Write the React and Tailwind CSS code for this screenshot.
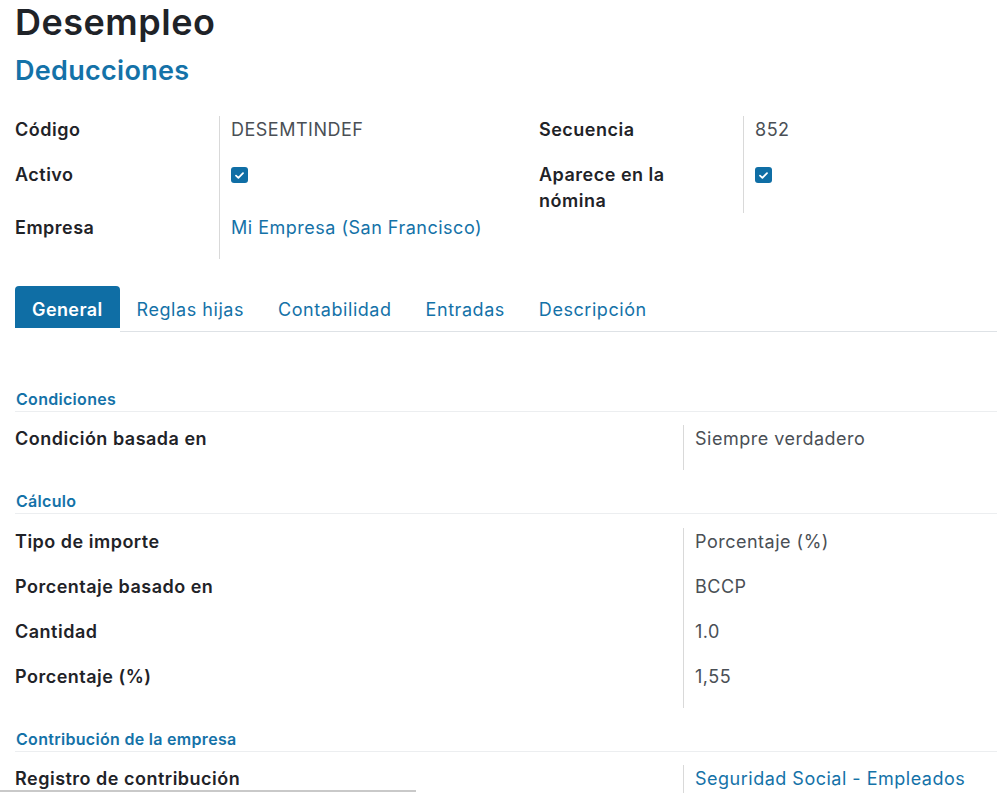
import React from "react";

const BLUE = "text-[#1472a8]";

function Check() {
  return (
    <div className="w-[17px] h-[16px] rounded-[3px] bg-[#0f6ea5] flex items-center justify-center">
      <svg width="9" height="7" viewBox="0 0 9 7" fill="none">
        <path d="M1 3.6 L3.4 5.8 L8 1.2" stroke="white" strokeWidth="1.8" strokeLinecap="round" strokeLinejoin="round" />
      </svg>
    </div>
  );
}

function Field({ label, children, h, twoLine }) {
  return (
    <>
      <div
        className={
          "font-semibold text-[#1f2328] text-[18px] tracking-[0.5px] " +
          (twoLine ? "leading-[26px] pt-[1px]" : "leading-[28px]")
        }
        style={{ height: h }}
      >
        {label}
      </div>
      <div
        className="border-l border-[#d9d9d9] pl-[11px] leading-[28px] text-[18px] tracking-[0.5px] text-[#4a4f55]"
        style={{ height: h }}
      >
        {children}
      </div>
    </>
  );
}

function SectionHeader({ children, first }) {
  return (
    <div className={(first ? "" : "mt-[21px] ") + "border-b border-[#eceef0] pb-[2px] pl-[1px]"}>
      <div className={"text-[16px] leading-[20px] font-semibold tracking-[0.3px] " + BLUE}>{children}</div>
    </div>
  );
}

function Row({ label, value, blue }) {
  return (
    <div className="grid grid-cols-[668px_1fr]">
      <div className="h-[45px] leading-[28px] text-[18px] tracking-[0.5px] font-semibold text-[#1f2328]">{label}</div>
      <div
        className={
          "border-l border-[#d9d9d9] pl-[11px] leading-[28px] text-[18px] tracking-[0.5px] " +
          (blue ? "text-[#1472a8]" : "text-[#4a4f55]")
        }
      >
        {value}
      </div>
    </div>
  );
}

export default function App() {
  return (
    <div className="relative w-[997px] h-[793px] overflow-hidden bg-white pl-[15px] font-['Inter','Noto_Sans',sans-serif]">
      <div className="text-[36px] leading-[44px] font-semibold text-[#1f2328] tracking-[0.5px]">Desempleo</div>
      <div className={"mt-[10px] text-[27px] leading-[34px] font-semibold tracking-[0.3px] " + BLUE}>Deducciones</div>

      <div className="mt-[28px] flex">
        <div className="w-[524px] grid grid-cols-[204px_1fr]">
          <Field label="Código" h="45px">DESEMTINDEF</Field>
          <Field label="Activo" h="53px">
            <div className="pt-[6px]">
              <Check />
            </div>
          </Field>
          <Field label="Empresa" h="45px">
            <span className="text-[#1472a8]">Mi Empresa (San Francisco)</span>
          </Field>
        </div>
        <div className="w-[300px] grid grid-cols-[204px_1fr] self-start">
          <Field label="Secuencia" h="45px">852</Field>
          <Field label={<>Aparece en la<br />nómina</>} h="52px" twoLine>
            <div className="pt-[6px]">
              <Check />
            </div>
          </Field>
        </div>
      </div>

      <div className="mt-[27px] flex h-[46px]">
        <div className="h-[42px] px-[17px] pt-[5px] bg-[#0f6ea5] rounded-t-[4px] flex items-center text-white font-semibold text-[18px] tracking-[0.4px]">
          General
        </div>
        <div className={"flex-1 flex h-[46px] border-b border-[#dee2e6] text-[18px] tracking-[0.55px] " + BLUE}>
          {["Reglas hijas", "Contabilidad", "Entradas", "Descripción"].map((t) => (
            <div key={t} className="h-[42px] px-[17px] pt-[5px] flex items-center">
              {t}
            </div>
          ))}
        </div>
      </div>

      <div className="mt-[57px]">
        <SectionHeader first>Condiciones</SectionHeader>
        <div className="mt-[13px]">
          <Row label="Condición basada en" value="Siempre verdadero" />
        </div>

        <SectionHeader>Cálculo</SectionHeader>
        <div className="mt-[14px]">
          <Row label="Tipo de importe" value="Porcentaje (%)" />
          <Row label="Porcentaje basado en" value="BCCP" />
          <Row label="Cantidad" value="1.0" />
          <Row label="Porcentaje (%)" value="1,55" />
        </div>

        <SectionHeader>Contribución de la empresa</SectionHeader>
        <div className="mt-[13px]">
          <Row label="Registro de contribución" value="Seguridad Social - Empleados" blue />
        </div>
      </div>

      <div className="absolute left-0 bottom-[1px] w-[416px] h-[2px] bg-[#c9c9c9]" />
    </div>
  );
}
